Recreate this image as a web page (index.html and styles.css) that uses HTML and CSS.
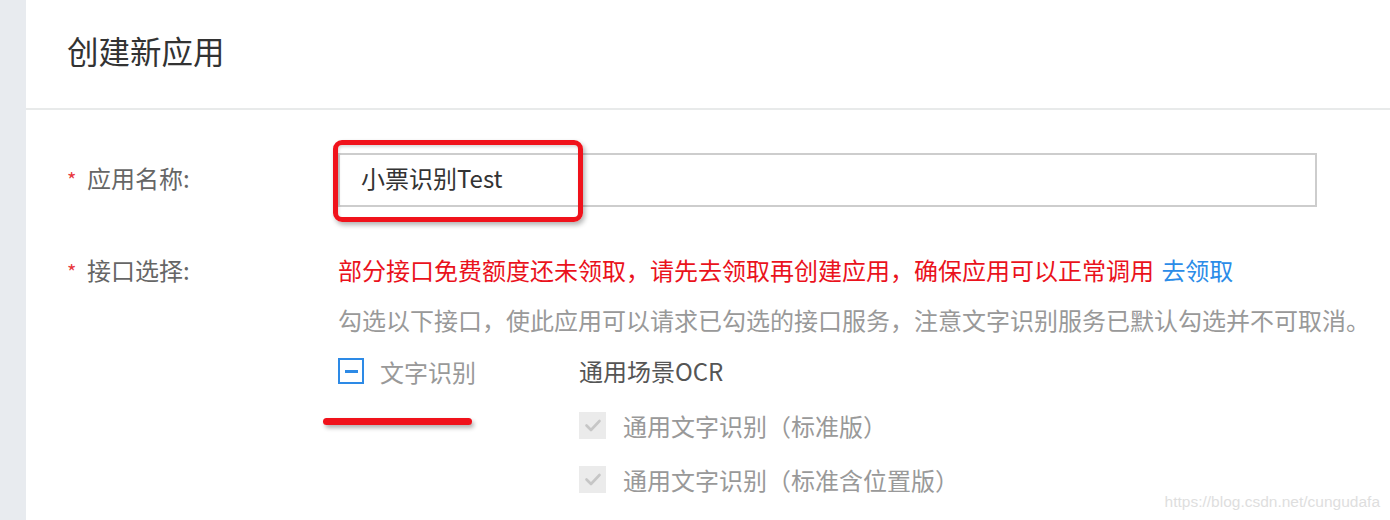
FILE: index.html
```html
<!DOCTYPE html>
<html lang="zh-CN">
<head>
<meta charset="utf-8">
<title>创建新应用</title>
<link rel="stylesheet" href="styles.css">
</head>
<body>
<div class="page">
  <aside class="side"></aside>
  <main class="main">
    <header class="head"><h1 class="title">创建新应用</h1></header>
    <div class="form">
      <div class="row row-name">
        <div class="label label-name"><span class="req">*</span>应用名称:</div>
        <div class="ctl">
          <div class="input-wrap">
            <div class="input">小票识别Test</div>
            <span class="mark-box"></span>
          </div>
        </div>
      </div>
      <div class="row row-api">
        <div class="label label-api"><span class="req">*</span>接口选择:</div>
        <div class="ctl">
          <p class="warn">部分接口免费额度还未领取，请先去领取再创建应用，确保应用可以正常调用 <a class="link">去领取</a></p>
          <p class="hint">勾选以下接口，使此应用可以请求已勾选的接口服务，注意文字识别服务已默认勾选并不可取消。</p>
          <div class="apis">
            <div class="cat">
              <div class="opt">
                <span class="cb cb-ind"><span class="dash"></span></span>
                <span class="cat-name">文字识别</span>
              </div>
              <span class="mark-line"></span>
            </div>
            <div class="subs">
              <div class="sub-title">通用场景OCR</div>
              <div class="opt">
                <span class="cb cb-dis"><svg viewBox="0 0 26 26" width="26" height="26"><path d="M6.5 13.5l4.5 4.5 8.5-9" fill="none" stroke="#c6c6c6" stroke-width="2.6" stroke-linecap="round" stroke-linejoin="round"/></svg></span>
                <span class="opt-name">通用文字识别（标准版）</span>
              </div>
              <div class="opt">
                <span class="cb cb-dis"><svg viewBox="0 0 26 26" width="26" height="26"><path d="M6.5 13.5l4.5 4.5 8.5-9" fill="none" stroke="#c6c6c6" stroke-width="2.6" stroke-linecap="round" stroke-linejoin="round"/></svg></span>
                <span class="opt-name">通用文字识别（标准含位置版）</span>
              </div>
            </div>
          </div>
        </div>
      </div>
    </div>
    <div class="watermark">https://blog.csdn.net/cungudafa</div>
  </main>
</div>
</body>
</html>
```

FILE: styles.css
```css
* { box-sizing: border-box; }
html, body { margin: 0; padding: 0; height: 100%; overflow: hidden; background: #fff; }
body {
  font-family: "Noto Sans CJK SC", "Noto Sans", sans-serif;
  color: #333;
}
.page { display: flex; height: 520px; }
.side { width: 26px; flex: none; background: #e8ebef; }
.main { flex: 1; position: relative; background: #fff; }
.head {
  height: 110px;
  padding-left: 41px;
  border-bottom: 2px solid #e8eaea;
  display: flex;
  align-items: center;
}
.title { margin: 0; font-size: 31.5px; font-weight: 400; color: #333; line-height: 1; position: relative; top: -3px; }
.form { padding: 43px 0 0 41px; }
.row { display: flex; align-items: flex-start; }
.label {
  width: 271px;
  flex: none;
  font-size: 24px;
  color: #666;
  display: flex;
  align-items: baseline;
}
.label-name { line-height: 50px; }
.req { color: #e8383d; width: 20px; font-size: 20px; }
.ctl { flex: 1; }
.input-wrap { position: relative; width: 979px; }
.input {
  height: 54px;
  border: 2px solid #cdcdcd;
  padding-left: 21px;
  font-size: 24px;
  line-height: 46px;
  color: #333;
}
.mark-box {
  position: absolute;
  left: -5px; top: -13px;
  width: 250px; height: 82px;
  border: 5px solid #f0121b;
  border-radius: 9px;
  box-shadow: 2px 3px 5px rgba(0,0,0,0.3), inset 1px 2px 3px rgba(0,0,0,0.15);
}
.row-api { margin-top: 38px; }
.label-api { line-height: 50px; }
.warn { margin: 0; font-size: 24px; line-height: 50px; color: #ea121c; }
.link { color: #2b8ce8; text-decoration: none; margin-left: 2px; }
.hint { margin: 0; font-size: 24px; line-height: 49px; color: #999; }
.apis { display: flex; }
.cat { width: 241px; flex: none; position: relative; }
.opt { display: flex; align-items: center; height: 54px; }
.cb { width: 26px; height: 26px; flex: none; display: flex; align-items: center; justify-content: center; }
.cb-ind { border: 2px solid #2d8ae6; background: #fff; }
.dash { width: 13px; height: 3px; background: #2d8ae6; }
.cat-name { margin-left: 16px; font-size: 24px; color: #999; }
.mark-line {
  position: absolute;
  left: -15px; top: 74px;
  width: 149px; height: 7px;
  background: #f0121b;
  border-radius: 4px;
  box-shadow: 2px 3px 4px rgba(0,0,0,0.3);
}
.subs { flex: 1; }
.sub-title { height: 54px; line-height: 54px; font-size: 24px; color: #555; }
.cb-dis { background: #ebebeb; width: 27px; height: 27px; }
.opt-name { margin-left: 17px; font-size: 24px; color: #999; }
.watermark {
  position: absolute;
  right: 10px; bottom: 9px;
  font-family: "Liberation Sans", Arial, sans-serif;
  font-size: 15.5px;
  color: #dedede;
}
```
